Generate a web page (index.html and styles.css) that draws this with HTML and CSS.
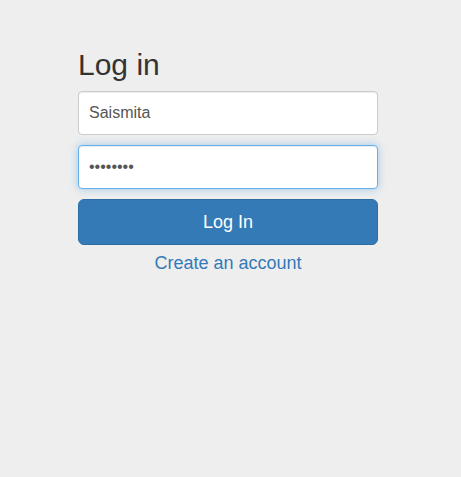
FILE: index.html
```html
<!DOCTYPE html>
<html>
<head>
<meta charset="utf-8">
<link rel="stylesheet" href="styles.css">
</head>
<body>
<div class="page">
  <form class="login">
    <h1 class="title">Log in</h1>
    <input class="field" type="text" value="Saismita">
    <input class="field focused" type="password" value="abcdefgh" autofocus>
    <button class="btn" type="button">Log In</button>
    <a class="link" href="#">Create an account</a>
  </form>
</div>
</body>
</html>
```
FILE: styles.css
```css
html, body {
  margin: 0;
  padding: 0;
  background: #eeeeee;
  height: 100%;
}
body {
  font-family: "Liberation Sans", Arial, sans-serif;
  color: #333;
}
.page {
  padding: 48px 0 0 78px;
}
.login {
  width: 300px;
  display: flex;
  flex-direction: column;
}
.title {
  margin: 0 0 10px;
  font-size: 30px;
  font-weight: normal;
  line-height: 33px;
  color: #333;
}
.field {
  box-sizing: border-box;
  height: 44px;
  margin: 0 0 10px;
  padding: 0 10px;
  font-family: inherit;
  font-size: 16px;
  color: #555;
  background: #fff;
  border: 1px solid #ccc;
  border-radius: 4px;
  box-shadow: inset 0 1px 1px rgba(0,0,0,.075);
  outline: none;
}
.field.focused,
.field:focus {
  border-color: #66afe9;
  box-shadow: inset 0 1px 1px rgba(0,0,0,.075), 0 0 8px rgba(102,175,233,.6);
}
.btn {
  box-sizing: border-box;
  height: 46px;
  margin: 0;
  padding: 0;
  font-family: inherit;
  font-size: 18px;
  color: #fff;
  background: #337ab7;
  border: 1px solid #2e6da4;
  border-radius: 6px;
}
.link {
  margin-top: 6px;
  font-size: 18px;
  line-height: 1.42857;
  color: #337ab7;
  text-decoration: none;
  text-align: center;
}
```
